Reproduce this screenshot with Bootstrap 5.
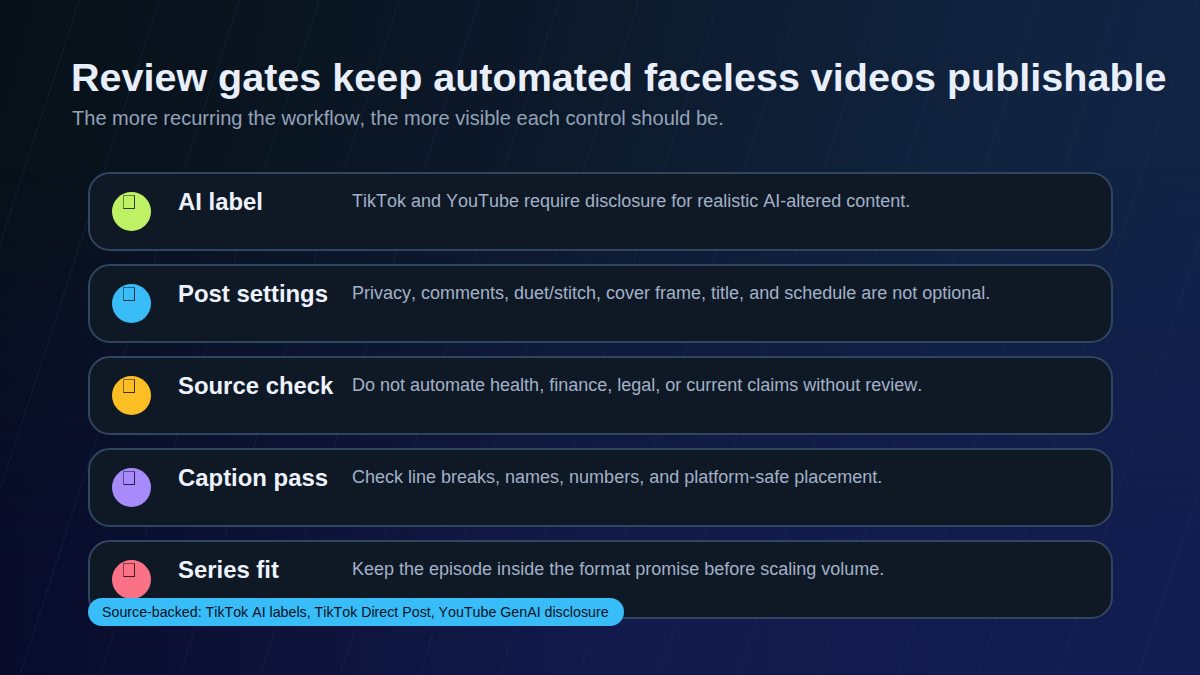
<!DOCTYPE html>
<html lang="en">
<head>
  <meta charset="UTF-8" />
  <title>Review gates</title>
  <link href="https://cdn.jsdelivr.net/npm/bootstrap@5.3.2/dist/css/bootstrap.min.css" rel="stylesheet" />
  <style>
    html, body { height: 100%; }
    body {
      width: 1200px; height: 675px; overflow: hidden; position: relative;
      font-family: "Liberation Sans", Arial, sans-serif;
      font-kerning: none;
      background: linear-gradient(105deg, #071017 0%, #0d1a2c 45%, #10233f 75%, #12244a 100%);
    }
    /* indigo wash towards the bottom edge */
    body::before {
      content: ""; position: absolute; inset: 0;
      background: linear-gradient(to right, #080c2a 0%, #121a4b 50%, #131c50 100%);
      -webkit-mask-image: linear-gradient(to bottom, transparent 25%, #000 85%);
      mask-image: linear-gradient(to bottom, transparent 25%, #000 85%);
    }
    /* faint diagonal lines */
    body::after {
      content: ""; position: absolute; inset: 0;
      background: repeating-linear-gradient(108deg, transparent 0, transparent 75px, rgba(28,56,90,.28) 75px, rgba(28,56,90,.28) 76px);
    }
    .slide { padding: 54px 34px 0 71px; position: relative; z-index: 1; height: 675px; }
    .slide-title { font-size: 39.5px; font-weight: 700; line-height: 46px; color: #e8effa; margin: 0; white-space: nowrap; }
    .slide-sub { font-size: 20.06px; line-height: 26px; color: #94a3b8; margin: 5px 0 0 1px; }
    .gate-list { margin: 41px 53px 0 17px; gap: 13px; }
    .gate {
      height: 79px; background: #0f1926; border: 2px solid #30455f; border-radius: 22px;
      padding: 0 22px;
    }
    .gate-dot { width: 39px; height: 39px; border-radius: 50%; margin-top: 18px; flex: none; }
    .tofu { display: block; width: 12px; height: 14px; margin: 3px 0 0 11px; border: 1px solid rgba(0,0,0,.75); border-top-color: rgba(0,0,0,.45); border-left-color: rgba(0,0,0,.45); }
    .gate-name { width: 174px; margin: 13px 0 0 27px; flex: none; font-size: 23.9px; line-height: 30px; font-weight: 700; color: #edf2fb; white-space: nowrap; }
    .gate-text { font-size: 18px; line-height: 24px; color: #a3b1c6; margin-top: 15px; white-space: nowrap; }
    .source-pill {
      position: absolute; left: 88px; top: 598px; height: 28px; width: 536px;
      background: #38bdf8; color: #07111f; border-radius: 14px;
      font-size: 14.23px; line-height: 28px; padding-left: 14px; white-space: nowrap;
    }
  </style>
</head>
<body>
  <div class="slide">
    <h1 class="slide-title">Review gates keep automated faceless videos publishable</h1>
    <p class="slide-sub">The more recurring the workflow, the more visible each control should be.</p>

    <div class="gate-list d-flex flex-column">
      <div class="gate d-flex">
        <div class="gate-dot" style="background:#bef264"><span class="tofu"></span></div>
        <div class="gate-name">AI label</div>
        <div class="gate-text">TikTok and YouTube require disclosure for realistic AI-altered content.</div>
      </div>
      <div class="gate d-flex">
        <div class="gate-dot" style="background:#38bdf8"><span class="tofu"></span></div>
        <div class="gate-name">Post settings</div>
        <div class="gate-text">Privacy, comments, duet/stitch, cover frame, title, and schedule are not optional.</div>
      </div>
      <div class="gate d-flex">
        <div class="gate-dot" style="background:#fbbf24"><span class="tofu"></span></div>
        <div class="gate-name">Source check</div>
        <div class="gate-text">Do not automate health, finance, legal, or current claims without review.</div>
      </div>
      <div class="gate d-flex">
        <div class="gate-dot" style="background:#a78bfa"><span class="tofu"></span></div>
        <div class="gate-name">Caption pass</div>
        <div class="gate-text">Check line breaks, names, numbers, and platform-safe placement.</div>
      </div>
      <div class="gate d-flex">
        <div class="gate-dot" style="background:#fb7185"><span class="tofu"></span></div>
        <div class="gate-name">Series fit</div>
        <div class="gate-text">Keep the episode inside the format promise before scaling volume.</div>
      </div>
    </div>

    <div class="source-pill">Source-backed: TikTok AI labels, TikTok Direct Post, YouTube GenAI disclosure</div>
  </div>
  <script src="https://cdn.jsdelivr.net/npm/bootstrap@5.3.2/dist/js/bootstrap.bundle.min.js"></script>
</body>
</html>
